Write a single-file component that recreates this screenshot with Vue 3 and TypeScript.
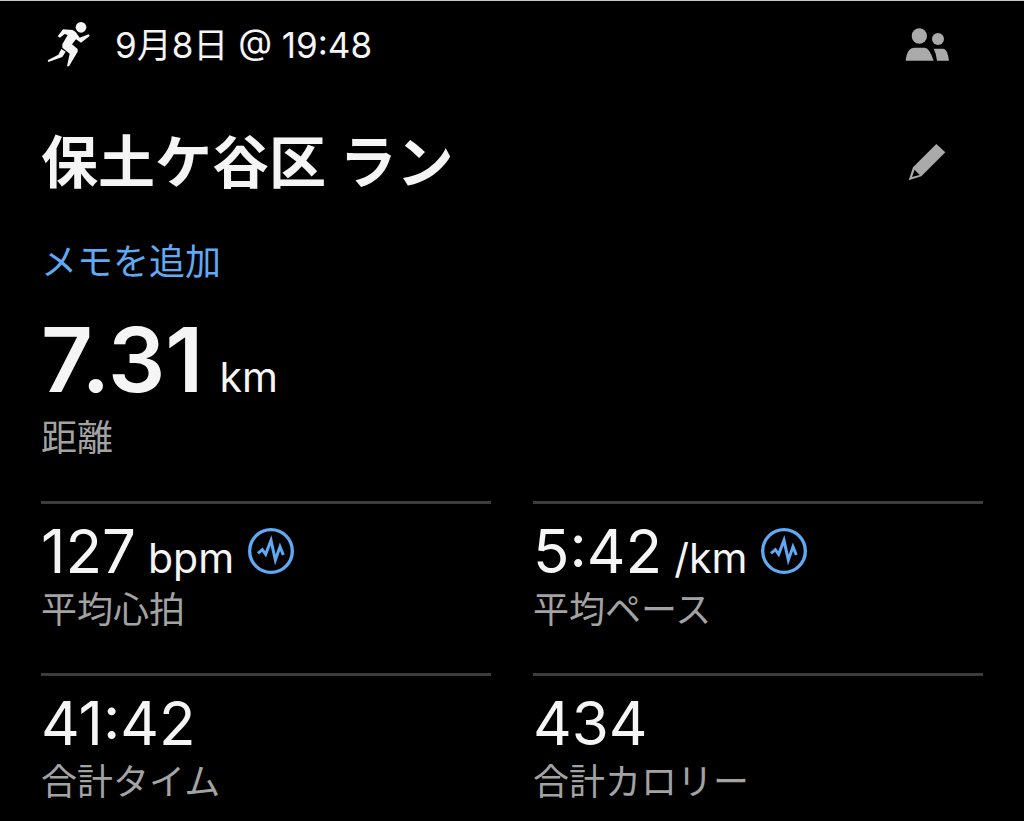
<script setup lang="ts">
interface Metric {
  id: string
  value: string
  unit?: string
  label: string
  chart?: boolean
}

const metrics: Metric[] = [
  { id: 'heart', value: '127', unit: 'bpm', label: '平均心拍', chart: true },
  { id: 'pace', value: '5:42', unit: '/km', label: '平均ペース', chart: true },
  { id: 'time', value: '41:42', label: '合計タイム' },
  { id: 'calories', value: '434', label: '合計カロリー' },
]
</script>

<template>
  <main class="activity">
    <header class="top">
      <svg class="runner" viewBox="3 0 180 180" aria-hidden="true">
        <circle cx="123" cy="37" r="16" />
        <path d="M53 64 69 43 98 45 107 51 119 68 146 58 149 63 123 83 108 73 96 88 113 102 113 110 87 154 81 154 89 116 67 98 67 88 83 60 74 57 60 68Z" />
        <path d="M64 102 77 110 67 126 25 141 23 136 55 119Z" />
      </svg>
      <time class="date">9月8日 @ 19:48</time>
      <button class="icon-button" type="button" aria-label="共有">
        <svg class="tool" viewBox="0 0 144 144">
          <circle cx="52" cy="45" r="23" />
          <circle cx="108" cy="54" r="18" />
          <path d="M11 119Q15 80 38 80H68Q82 80 95 119Z" />
          <path d="M95 83H124Q136 83 141 119H105Q103 98 95 83Z" />
        </svg>
      </button>
    </header>

    <div class="title-row">
      <h1 class="title">保土ケ谷区 ラン</h1>
      <button class="icon-button" type="button" aria-label="編集">
        <svg class="tool" viewBox="0 0 144 144">
          <path fill-rule="evenodd" d="M103 15 130 40 58 112 20 124 33 85ZM38 92 30 114 53 108Z" />
        </svg>
      </button>
    </div>

    <a class="memo" href="#memo">メモを追加</a>

    <section class="distance">
      <p class="distance-value">7.31<span class="unit">km</span></p>
      <p class="label">距離</p>
    </section>

    <section class="metrics">
      <article v-for="metric in metrics" :key="metric.id" class="metric">
        <div class="metric-head">
          <p class="value">{{ metric.value }}<span v-if="metric.unit" class="unit">{{ metric.unit }}</span></p>
          <button v-if="metric.chart" class="chart" type="button" :aria-label="metric.label + 'のグラフ'">
            <svg class="pulse" viewBox="0 0 138 138">
              <circle cx="69" cy="69" r="64" />
              <path d="M30 76 43 65 53 79 69 37 82 96 96 56 106 81" />
            </svg>
          </button>
        </div>
        <p class="label">{{ metric.label }}</p>
      </article>
    </section>
  </main>
</template>

<style>
html,
body {
  background: #000;
}
</style>

<style scoped>
.activity {
  box-sizing: border-box;
  padding: 0 41px 15px;
  border-top: 1px solid #c5c9c8;
  background: #000;
  color: #f5f5f5;
  font-family: Inter, "Noto Sans CJK JP", sans-serif;
}

p,
h1 {
  margin: 0;
}

button {
  display: flex;
  padding: 0;
  border: 0;
  background: none;
  color: inherit;
}

svg {
  display: block;
}

.top {
  display: flex;
  align-items: center;
  height: 88px;
}

.runner {
  width: 60px;
  height: 60px;
  fill: #f5f5f5;
}

.date {
  margin-left: 14px;
  font-size: 35px;
  line-height: 48px;
}

.icon-button {
  margin-left: auto;
  margin-right: 33px;
}

.tool {
  width: 48px;
  height: 48px;
  fill: #aaa;
}

.title-row {
  display: flex;
  align-items: center;
  margin-top: 38px;
}

.title {
  font-size: 57px;
  font-weight: 700;
  line-height: 72px;
}

.memo {
  display: block;
  width: fit-content;
  margin-top: 39px;
  color: #60a9f3;
  font-size: 36px;
  line-height: 48px;
  text-decoration: none;
}

.distance {
  margin-top: 24px;
}

.distance-value {
  margin-bottom: 4px;
  font-size: 90px;
  font-weight: 600;
  line-height: 100px;
}

.unit {
  margin-left: 12px;
  font-size: 41px;
  font-weight: 400;
  line-height: 48px;
}

.distance-value .unit {
  margin-left: 16px;
}

.label {
  color: #a3a3a3;
  font-size: 36px;
  line-height: 48px;
}

.metrics {
  display: grid;
  grid-template-columns: 1fr 1fr;
  gap: 39px 42px;
  margin-top: 39px;
}

.metric {
  padding-top: 12px;
  border-top: 3px solid #3c3c3c;
}

.metric-head {
  display: flex;
  align-items: center;
  gap: 14px;
}

.value {
  font-size: 60px;
  line-height: 70px;
}

.pulse {
  width: 46px;
  height: 46px;
  fill: none;
  stroke: #60a9f3;
  stroke-width: 10;
}

.pulse path {
  stroke-width: 9;
}
</style>
